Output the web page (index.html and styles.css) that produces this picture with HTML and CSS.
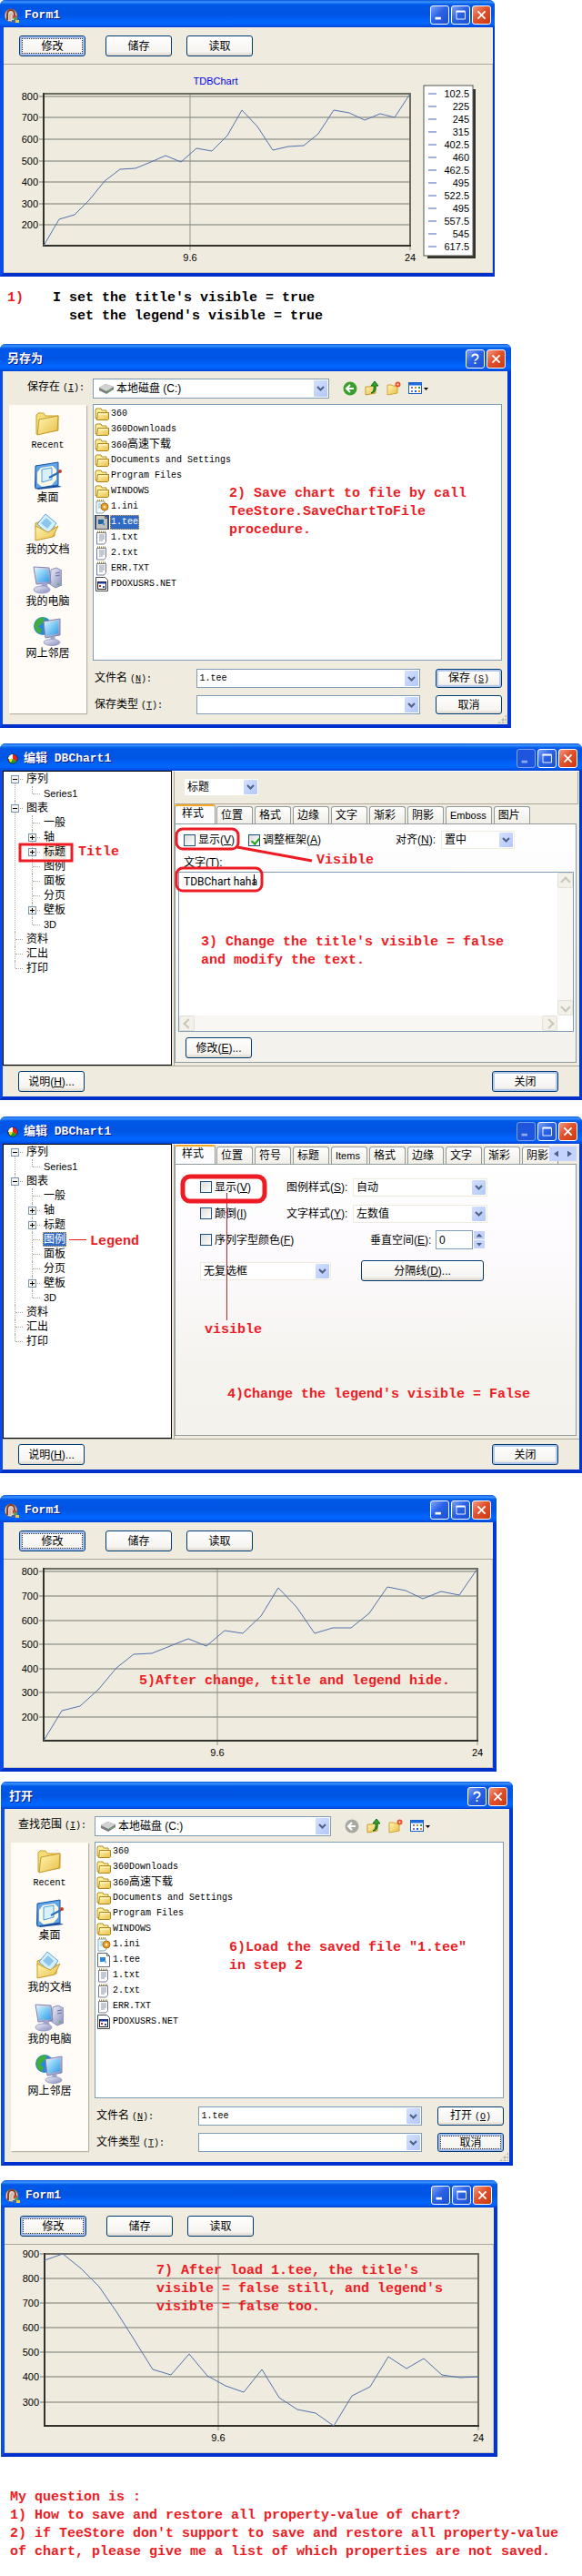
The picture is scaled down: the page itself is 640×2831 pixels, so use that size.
FILE: index.html
```html
<!DOCTYPE html>
<html lang="en">
<head>
	<meta charset="UTF-8">
	<meta name="viewport" content="width=device-width">
	<title>TeeChart: saving and restoring property values</title>

	<link rel="stylesheet" href="styles.css">
</head>

<body>

<!-- icons used by several windows -->
<svg class="sprite" aria-hidden="true">
	<defs>
		<linearGradient id="gFolder" x1="0" y1="0" x2="1" y2="1">
			<stop offset="0" stop-color="#fff6b5"/><stop offset="1" stop-color="#e9bf45"/>
		</linearGradient>
		<linearGradient id="gScreen" x1="0" y1="0" x2="1" y2="1">
			<stop offset="0" stop-color="#c6f3ff"/><stop offset="1" stop-color="#2f9be8"/>
		</linearGradient>
		<linearGradient id="gMetal" x1="0" y1="0" x2="1" y2="1">
			<stop offset="0" stop-color="#f1f2fb"/><stop offset="1" stop-color="#8389b8"/>
		</linearGradient>
	</defs>

	<symbol id="app" viewBox="0 0 16 16">
		<circle cx="7" cy="8" r="7" fill="#d8d5d2" stroke="#6b625e"/>
		<path d="M3 13V7a4 5 0 0 1 8 0v5" fill="none" stroke="#8d3a22" stroke-width="2"/>
		<path d="M6 13V7q1-3 3 0v5" fill="none" stroke="#dd9c72"/>
		<rect x="9" y="8" width="4" height="3" fill="#c74634"/><rect x="10" y="10" width="4" height="3" fill="#5b9b52"/>
		<rect x="8" y="13" width="4" height="3" fill="#3d63c0"/><rect x="12" y="13" width="4" height="3" fill="#f2c832"/>
	</symbol>
	<symbol id="pie" viewBox="0 0 12 12">
		<circle cx="6" cy="6" r="5" fill="#f4e01c" stroke="#111"/>
		<path d="M6 6V1A5 5 0 0 0 1 6z" fill="#fff"/><path d="M6 6V1a5 5 0 0 1 4 8z" fill="#e3221b"/>
		<path d="M6 6l4 3a5 5 0 0 1-6 1z" fill="#169c2b"/>
	</symbol>
	<symbol id="chev" viewBox="0 0 9 6"><path d="M1 1l3.500 3.500L8 1" fill="none" stroke="#4d6185" stroke-width="2"/></symbol>
	<symbol id="folder" viewBox="0 0 16 16">
		<path d="M1 13V3l1-1h5l1 2h5v9z" fill="#fff0a0" stroke="#b58a1b"/>
		<path d="M2.500 14.500l1-8h12v7l-1 1z" fill="url(#gFolder)" stroke="#b08318"/>
		<path d="M4 8h10" stroke="#fff9d8"/>
	</symbol>
	<symbol id="ini" viewBox="0 0 16 16">
		<path d="M2 2h9v11l-2 2H2z" fill="#f2fafd" stroke="#87a8b5"/><path d="M3 1h8" stroke="#b89535" stroke-dasharray="1 1" stroke-width="2"/>
		<path d="M4 5h3M4 7h3M4 9h3" stroke="#79bfe0"/><circle cx="11" cy="8" r="4" fill="#e79a21" stroke="#b36e12"/><circle cx="11" cy="8" r="1.500" fill="#fbe6b5"/>
	</symbol>
	<symbol id="tee" viewBox="0 0 16 16">
		<path d="M1.500.5h10l3 3v12h-13z" fill="#fff" stroke="#6c6c6c"/><path d="M11.500.5v3h3" fill="none" stroke="#6c6c6c"/>
		<path d="M4 5h6v5H4z" fill="#2f86d4"/><path d="M7 9h4v3z" fill="#74b9e8"/>
	</symbol>
	<symbol id="txt" viewBox="0 0 16 16">
		<path d="M2.500 2.500h10v10l-2 2.500h-8z" fill="#fff" stroke="#7b7b95"/><path d="M3 1.500h9" stroke="#93813c" stroke-width="2" stroke-dasharray="1 1"/>
		<path d="M5 5h6M5 7h6M5 9h6M5 11h4" stroke="#8693a8"/>
	</symbol>
	<symbol id="net" viewBox="0 0 16 16">
		<path d="M1.500.5h10l3 3v12h-13z" fill="#fff" stroke="#4c4c4c"/>
		<rect x="3.500" y="5.500" width="9" height="8" fill="#fff" stroke="#222"/><path d="M4 6.500h8" stroke="#1f3bb0" stroke-width="2"/>
		<rect x="5" y="9" width="2" height="2" fill="#d62121"/><rect x="9" y="10" width="2" height="2" fill="#2545d6"/>
	</symbol>
	<symbol id="disk" viewBox="0 0 16 12">
		<path d="M0 5l7-4 9 3v3l-8 5-8-4z" fill="#7c7c7c"/><path d="M0 5l7-4 9 3-8 5z" fill="#d2d2d2"/><path d="M10 9l4-2" stroke="#53c653" stroke-width="1"/>
	</symbol>

	<symbol id="p-recent" viewBox="0 0 32 32">
		<path d="M4 27V6l2-2h6l2 3h14v16z" fill="#f7dd78" stroke="#c9a02c"/>
		<path d="M5 28l2-17 21-4-1 16z" fill="url(#gFolder)" stroke="#c39a2a"/>
	</symbol>
	<symbol id="p-desk" viewBox="0 0 32 32">
		<path d="M2 5l24-3v24l5 2-26 3-4-3z" fill="#1d4f9e"/><path d="M2 5l25-4v25L2 30z" fill="#5fa5ea" stroke="#1b559f"/>
		<path d="M8 7l13-2 4 4v11l-5 6-11 2-5-4V12z" fill="#fdf8df"/>
		<path d="M9 9l11-2v13l-11 3z" fill="#d9f1ff" stroke="#4c9ee0"/><path d="M17 18l11-6" stroke="#2c6fb8" stroke-width="2"/><circle cx="29" cy="11" r="2" fill="#cf3b21"/>
	</symbol>
	<symbol id="p-docs" viewBox="0 0 32 32">
		<path d="M3 11l8-3 3 2h10v15L4 29z" fill="#f4d566" stroke="#c79a28"/>
		<path d="M5 12L14 1l12 10-9 12z" fill="#d6effc" stroke="#5da7da"/><path d="M9 11l6-6 6 6-5 6z" fill="#8cc6ee"/>
		<path d="M3 30V14l14 7 11-7-6 12z" fill="url(#gFolder)" stroke="#c79a28"/>
	</symbol>
	<symbol id="p-pc" viewBox="0 0 32 32">
		<path d="M20 5l6-2 6 3v16l-7 3-6-4z" fill="url(#gMetal)" stroke="#8a8fb8"/><path d="M25 9l5-1M25 12l5-1" stroke="#6c72a0"/><rect x="27" y="20" width="2" height="2" fill="#4fc04d"/>
		<path d="M1 2l17 1 2 17-16 1z" fill="url(#gMetal)" stroke="#7d84b4"/><path d="M3 4l14 1 1 13-13 1z" fill="url(#gScreen)"/>
		<path d="M10 20l5-1 2 6H9z" fill="#9ea3cb"/><ellipse cx="10" cy="27" rx="9" ry="4" fill="url(#gMetal)" stroke="#9ba0c6"/>
	</symbol>
	<symbol id="p-net" viewBox="0 0 32 32">
		<circle cx="11" cy="10" r="10" fill="#2e86d6"/><path d="M3 5q5-6 11-4l-3 5-5 5 4 3-2 5Q0 15 3 5z" fill="#3fae3b"/>
		<path d="M12 5l18-3v18l-16 3z" fill="url(#gMetal)" stroke="#7d84b4"/><path d="M14 7l14-3v14l-13 3z" fill="url(#gScreen)"/>
		<path d="M19 22l5-1 1 4h-5z" fill="#9ea3cb"/><ellipse cx="21" cy="28" rx="9" ry="3.500" fill="url(#gMetal)" stroke="#9ba0c6"/>
	</symbol>

	<symbol id="t-back" viewBox="0 0 16 16">
		<circle cx="8" cy="8" r="7.500" fill="currentColor"/><path d="M8 4L4 8l4 4M4 8h8" fill="none" stroke="#fff" stroke-width="2"/>
	</symbol>
	<symbol id="t-up" viewBox="0 0 16 16">
		<path d="M1 15V6h5l1-1h5v8z" fill="url(#gFolder)" stroke="#c39a2a"/><path d="M7 13q4-2 3-8H7l4-5 4 5h-3q1 8-5 8z" fill="#2fa32b" stroke="#146b17"/>
	</symbol>
	<symbol id="t-new" viewBox="0 0 16 16">
		<path d="M1 15V4h5l1 1h5v8z" fill="url(#gFolder)" stroke="#d0a238"/><circle cx="12.500" cy="3.500" r="2" fill="#fff" stroke="#e8532a" stroke-width="2"/>
	</symbol>
	<symbol id="t-view" viewBox="0 0 22 16">
		<rect x=".5" y="1.500" width="14" height="12" fill="#fff" stroke="#1f5fc7"/><path d="M1 3h13" stroke="#1d6be0" stroke-width="3"/>
		<path d="M3 7h2M3 11h2" stroke="#7a7a9c" stroke-width="2"/><path d="M7 7h2M11 11h2" stroke="#d08b34" stroke-width="2"/><path d="M11 7h2" stroke="#2a9a3b" stroke-width="2"/><path d="M7 11h2" stroke="#2555d8" stroke-width="2"/>
		<path d="M17 7h5l-2.500 3z" fill="#000"/>
	</symbol>
	<symbol id="w-min" viewBox="0 0 21 21"><rect x="5" y="13" width="7" height="3" fill="#fff"/></symbol>
	<symbol id="w-max" viewBox="0 0 21 21"><path d="M5 6.500h11v9H5.500v-9" fill="none" stroke="#fff"/><path d="M5 6h11" stroke="#fff" stroke-width="2"/></symbol>
	<symbol id="w-close" viewBox="0 0 21 21"><path d="M6 6l9 9M15 6l-9 9" stroke="#fff" stroke-width="2"/></symbol>
	<symbol id="w-help" viewBox="0 0 21 21"><path d="M7 8q0-3 3.500-3T14 8q0 2-2 3t-1.500 2M10.500 14.500v2" fill="none" stroke="#fff" stroke-width="2"/></symbol>
</svg>

<main>

<!-- step 1 -->
<section class="window form cut-right">
	<header class="titlebar">
		<svg class="app-icon"><use href="#app"/></svg>
		<h2>Form1</h2>
		<button class="wbtn" aria-label="Minimize"><svg><use href="#w-min"/></svg></button>
		<button class="wbtn" aria-label="Maximize"><svg><use href="#w-max"/></svg></button>
		<button class="wbtn close" aria-label="Close"><svg><use href="#w-close"/></svg></button>
	</header>
	<div class="toolbar">
		<button class="btn focused">修改</button>
		<button class="btn">储存</button>
		<button class="btn">读取</button>
	</div>
	<svg class="chart" viewBox="0 0 538 229">
		<text class="chart-title" x="233" y="22">TDBChart</text>
		<path class="grid" d="M39 35h408M39 58h408M39 82h408M39 106h408M39 129h408M39 153h408M39 176h408"/>
		<path class="grid thin" d="M205 32v172M447 199v5"/>
		<path class="frame-light" d="M44 32h403v167"/>
		<path class="frame" d="M44 31v168h404"/>
		<g class="ylabels">
			<text x="38" y="39">800</text><text x="38" y="62">700</text><text x="38" y="86">600</text><text x="38" y="110">500</text><text x="38" y="133">400</text><text x="38" y="157">300</text><text x="38" y="180">200</text>
		</g>
		<g class="xlabels"><text x="205" y="216">9.6</text><text x="447" y="216">24</text></g>
		<polyline class="series" points="44,199 61,170 78,165 94,149 111,128 128,115 145,114 162,107 178,100 195,107 212,92 229,95 246,78 262,50 279,68 296,94 313,90 330,89 346,76 363,50 380,53 397,61 414,54 430,58 447,32"/>
		<rect class="legend-shadow" x="466" y="27" width="53" height="186"/>
		<rect class="legend-box" x="462" y="23" width="54" height="187"/>
		<path class="legend-keys" d="M467 32h9M467 46h9M467 60h9M467 74h9M467 88h9M467 102h9M467 116h9M467 130h9M467 144h9M467 158h9M467 172h9M467 186h9M467 200h9"/>
		<g class="ylabels">
			<text x="512" y="36">102.5</text><text x="512" y="50">225</text><text x="512" y="64">245</text><text x="512" y="78">315</text><text x="512" y="92">402.5</text><text x="512" y="106">460</text><text x="512" y="120">462.5</text><text x="512" y="134">495</text><text x="512" y="148">522.5</text><text x="512" y="162">495</text><text x="512" y="176">557.5</text><text x="512" y="190">545</text><text x="512" y="204">617.5</text>
		</g>
	</svg>
</section>

<div class="caption">
	<span class="num">1)</span>
	<p>I set the title's visible = true<br><span class="indent">set the legend's visible = true</span></p>
</div>

<!-- step 2 -->
<section class="window dialog cut-left">
	<header class="titlebar">
		<h2>另存为</h2>
		<button class="wbtn help" aria-label="Help"><svg><use href="#w-help"/></svg></button>
		<button class="wbtn close" aria-label="Close"><svg><use href="#w-close"/></svg></button>
	</header>
	<div class="dialog-body">
		<div class="lookin">
			<label for="save-in">保存在<span class="lat">(<u>I</u>):</span></label>
			<div class="combo with-icon">
				<svg class="disk"><use href="#disk"/></svg>
				<select id="save-in"><option>本地磁盘 (C:)</option></select>
				<span class="arrow"><svg><use href="#chev"/></svg></span>
			</div>
			<div class="nav">
				<button class="tool green" aria-label="Back"><svg><use href="#t-back"/></svg></button>
				<button class="tool" aria-label="Up one level"><svg><use href="#t-up"/></svg></button>
				<button class="tool" aria-label="New folder"><svg><use href="#t-new"/></svg></button>
				<button class="tool wide" aria-label="Views"><svg><use href="#t-view"/></svg></button>
			</div>
		</div>
		<div class="browse">
			<nav class="places">
				<a href="#"><svg><use href="#p-recent"/></svg><span class="lat">Recent</span></a>
				<a href="#"><svg><use href="#p-desk"/></svg>桌面</a>
				<a href="#"><svg><use href="#p-docs"/></svg>我的文档</a>
				<a href="#"><svg><use href="#p-pc"/></svg>我的电脑</a>
				<a href="#"><svg><use href="#p-net"/></svg>网上邻居</a>
			</nav>
			<div class="right">
				<ul class="files">
					<li><svg><use href="#folder"/></svg><span>360</span></li>
					<li><svg><use href="#folder"/></svg><span>360Downloads</span></li>
					<li><svg><use href="#folder"/></svg><span>360<b class="cjk">高速下载</b></span></li>
					<li><svg><use href="#folder"/></svg><span>Documents and Settings</span></li>
					<li><svg><use href="#folder"/></svg><span>Program Files</span></li>
					<li><svg><use href="#folder"/></svg><span>WINDOWS</span></li>
					<li><svg><use href="#ini"/></svg><span>1.ini</span></li>
					<li class="selected"><svg><use href="#tee"/></svg><span>1.tee</span></li>
					<li><svg><use href="#txt"/></svg><span>1.txt</span></li>
					<li><svg><use href="#txt"/></svg><span>2.txt</span></li>
					<li><svg><use href="#txt"/></svg><span>ERR.TXT</span></li>
					<li><svg><use href="#net"/></svg><span>PDOXUSRS.NET</span></li>
				</ul>
				<div class="fields">
					<label for="save-name">文件名<span class="lat">(<u>N</u>):</span></label>
					<div class="combo"><input id="save-name" type="text" value="1.tee"><span class="arrow"><svg><use href="#chev"/></svg></span></div>
					<button class="btn default">保存<span class="lat">(<u>S</u>)</span></button>
					<label for="save-type">保存类型<span class="lat">(<u>T</u>):</span></label>
					<div class="combo"><select id="save-type"><option></option></select><span class="arrow"><svg><use href="#chev"/></svg></span></div>
					<button class="btn">取消</button>
				</div>
			</div>
		</div>
	</div>
	<span class="grip"></span>
	<p class="note note-2">2) Save chart to file by call<br>TeeStore.SaveChartToFile<br>procedure.</p>
</section>

<!-- step 3 -->
<section class="window editor">
	<header class="titlebar">
		<svg class="pie-icon"><use href="#pie"/></svg>
		<h2>编辑 DBChart1</h2>
		<button class="wbtn" aria-label="Minimize" disabled><svg><use href="#w-min"/></svg></button>
		<button class="wbtn" aria-label="Maximize"><svg><use href="#w-max"/></svg></button>
		<button class="wbtn close" aria-label="Close"><svg><use href="#w-close"/></svg></button>
	</header>
	<div class="split">
		<ul class="tree">
			<li><button class="twist minus" aria-label="Collapse"></button><span>序列</span>
				<ul><li><span class="small">Series1</span></li></ul>
			</li>
			<li><button class="twist minus" aria-label="Collapse"></button><span>图表</span>
				<ul>
					<li><span>一般</span></li>
					<li><button class="twist" aria-label="Expand"></button><span>轴</span></li>
					<li><button class="twist" aria-label="Expand"></button><span class="dim">标题</span></li>
					<li><span>图例</span></li>
					<li><span>面板</span></li>
					<li><span>分页</span></li>
					<li><button class="twist" aria-label="Expand"></button><span>壁板</span></li>
					<li><span class="small">3D</span></li>
				</ul>
			</li>
			<li><span>资料</span></li>
			<li><span>汇出</span></li>
			<li><span>打印</span></li>
		</ul>
		<div class="pane">
			<div class="pane-top">
				<div class="combo flat part"><select aria-label="Part"><option>标题</option></select><span class="arrow"><svg><use href="#chev"/></svg></span></div>
			</div>
			<div class="tabs" role="tablist">
				<button role="tab" class="on">样式</button><button role="tab">位置</button><button role="tab">格式</button><button role="tab">边缘</button><button role="tab">文字</button><button role="tab">渐彩</button><button role="tab">阴影</button><button role="tab" class="small">Emboss</button><button role="tab">图片</button>
			</div>
			<div class="panel">
				<div class="title-opts">
					<label class="check"><input type="checkbox">显示(<u>V</u>)</label>
					<label class="check"><input type="checkbox" checked>调整框架(<u>A</u>)</label>
					<label for="align">对齐(<u>N</u>):</label>
					<div class="combo flat"><select id="align"><option>置中</option></select><span class="arrow"><svg><use href="#chev"/></svg></span></div>
				</div>
				<label class="text-label" for="title-text">文字(<u>T</u>):</label>
				<div class="memo">
					<textarea id="title-text">TDBChart haha</textarea>
					<div class="vbar"><span class="sb up"></span><span class="sb down"></span></div>
					<div class="hbar"><span class="sb left"></span><span class="sb rightward"></span></div>
				</div>
				<button class="btn edit">修改(<u>E</u>)...</button>
			</div>
		</div>
	</div>
	<footer class="editor-foot">
		<button class="btn">说明(<u>H</u>)...</button>
		<button class="btn default">关闭</button>
	</footer>
	<svg class="marks" viewBox="0 0 640 392">
		<path d="M279.500 144v12" stroke="#000"/>
		<rect x="22" y="111" width="57" height="18" stroke-width="3"/>
		<rect x="194" y="94" width="68" height="22" rx="7" stroke-width="3"/>
		<rect x="194" y="137" width="94" height="25" rx="7" stroke-width="3"/>
		<path d="M261 114l82 15" stroke-width="3"/>
	</svg>
	<p class="note note-title">Title</p>
	<p class="note note-visible">Visible</p>
	<p class="note note-3">3) Change the title's visible = false<br>and modify the text.</p>
</section>

<!-- step 4 -->
<section class="window editor">
	<header class="titlebar">
		<svg class="pie-icon"><use href="#pie"/></svg>
		<h2>编辑 DBChart1</h2>
		<button class="wbtn" aria-label="Minimize" disabled><svg><use href="#w-min"/></svg></button>
		<button class="wbtn" aria-label="Maximize"><svg><use href="#w-max"/></svg></button>
		<button class="wbtn close" aria-label="Close"><svg><use href="#w-close"/></svg></button>
	</header>
	<div class="split">
		<ul class="tree">
			<li><button class="twist minus" aria-label="Collapse"></button><span>序列</span>
				<ul><li><span class="small">Series1</span></li></ul>
			</li>
			<li><button class="twist minus" aria-label="Collapse"></button><span>图表</span>
				<ul>
					<li><span>一般</span></li>
					<li><button class="twist" aria-label="Expand"></button><span>轴</span></li>
					<li><button class="twist" aria-label="Expand"></button><span>标题</span></li>
					<li><span class="picked">图例</span></li>
					<li><span>面板</span></li>
					<li><span>分页</span></li>
					<li><button class="twist" aria-label="Expand"></button><span>壁板</span></li>
					<li><span class="small">3D</span></li>
				</ul>
			</li>
			<li><span>资料</span></li>
			<li><span>汇出</span></li>
			<li><span>打印</span></li>
		</ul>
		<div class="pane">
			<div class="tabs" role="tablist">
				<button role="tab" class="on">样式</button><button role="tab">位置</button><button role="tab">符号</button><button role="tab">标题</button><button role="tab" class="small">Items</button><button role="tab">格式</button><button role="tab">边缘</button><button role="tab">文字</button><button role="tab">渐彩</button><button role="tab">阴影</button>
				<span class="tab-scroll"><button class="tri prev" aria-label="Previous tabs"></button><button class="tri next" aria-label="More tabs"></button></span>
			</div>
			<div class="panel legend-opts">
				<div class="row">
					<label class="check"><input type="checkbox">显示(<u>V</u>)</label>
					<label for="lstyle">图例样式(<u>S</u>):</label>
					<div class="combo flat"><select id="lstyle"><option>自动</option></select><span class="arrow"><svg><use href="#chev"/></svg></span></div>
				</div>
				<div class="row">
					<label class="check"><input type="checkbox">颠倒(<u>I</u>)</label>
					<label for="tstyle">文字样式(<u>Y</u>):</label>
					<div class="combo flat"><select id="tstyle"><option>左数值</option></select><span class="arrow"><svg><use href="#chev"/></svg></span></div>
				</div>
				<div class="row spin-row">
					<label class="check"><input type="checkbox">序列字型颜色(<u>F</u>)</label>
					<label for="vspace">垂直空间(<u>E</u>):</label>
					<input id="vspace" class="num-box" type="text" value="0">
					<span class="spin"><button class="tri inc" aria-label="Increase"></button><button class="tri dec" aria-label="Decrease"></button></span>
				</div>
				<div class="row last-row">
					<div class="combo flat"><select aria-label="Check boxes"><option>无复选框</option></select><span class="arrow"><svg><use href="#chev"/></svg></span></div>
					<button class="btn">分隔线(<u>D</u>)...</button>
				</div>
			</div>
		</div>
	</div>
	<footer class="editor-foot">
		<button class="btn">说明(<u>H</u>)...</button>
		<button class="btn default">关闭</button>
	</footer>
	<svg class="marks" viewBox="0 0 640 392">
		<rect x="201" y="66" width="90" height="27" rx="8" stroke-width="5"/>
		<path d="M249.500 84v140M76 135.500h19"/>
	</svg>
	<p class="note note-legend">Legend</p>
	<p class="note note-visible2">visible</p>
	<p class="note note-4">4)Change the legend's visible = False</p>
</section>

<!-- step 5 -->
<section class="window form after">
	<header class="titlebar">
		<svg class="app-icon"><use href="#app"/></svg>
		<h2>Form1</h2>
		<button class="wbtn" aria-label="Minimize"><svg><use href="#w-min"/></svg></button>
		<button class="wbtn" aria-label="Maximize"><svg><use href="#w-max"/></svg></button>
		<button class="wbtn close" aria-label="Close"><svg><use href="#w-close"/></svg></button>
	</header>
	<div class="toolbar">
		<button class="btn focused">修改</button>
		<button class="btn">储存</button>
		<button class="btn">读取</button>
	</div>
	<svg class="chart" viewBox="0 0 538 229">
		<path class="grid" d="M39 13h482M39 40h482M39 67h482M39 93h482M39 120h482M39 146h482M39 173h482"/>
		<path class="grid thin" d="M235 10v194M521 199v5"/>
		<path class="frame-light" d="M44 10h477v189"/>
		<path class="frame" d="M44 9v190h478"/>
		<g class="ylabels">
			<text x="38" y="17">800</text><text x="38" y="44">700</text><text x="38" y="71">600</text><text x="38" y="97">500</text><text x="38" y="124">400</text><text x="38" y="150">300</text><text x="38" y="177">200</text>
		</g>
		<g class="xlabels"><text x="235" y="216">9.6</text><text x="521" y="216">24</text></g>
		<polyline class="series" points="44,199 64,166 84,161 104,143 124,119 143,104 163,103 183,95 203,87 223,95 243,78 263,81 283,62 302,31 322,52 342,81 362,75 382,75 402,59 422,30 442,34 461,43 481,35 501,39 521,10"/>
	</svg>
	<p class="note note-5">5)After change, title and legend hide.</p>
</section>

<!-- step 6 -->
<section class="window dialog">
	<header class="titlebar">
		<h2>打开</h2>
		<button class="wbtn help" aria-label="Help"><svg><use href="#w-help"/></svg></button>
		<button class="wbtn close" aria-label="Close"><svg><use href="#w-close"/></svg></button>
	</header>
	<div class="dialog-body">
		<div class="lookin">
			<label for="open-in">查找范围<span class="lat">(<u>I</u>):</span></label>
			<div class="combo with-icon">
				<svg class="disk"><use href="#disk"/></svg>
				<select id="open-in"><option>本地磁盘 (C:)</option></select>
				<span class="arrow"><svg><use href="#chev"/></svg></span>
			</div>
			<div class="nav">
				<button class="tool grey" aria-label="Back" disabled><svg><use href="#t-back"/></svg></button>
				<button class="tool" aria-label="Up one level"><svg><use href="#t-up"/></svg></button>
				<button class="tool" aria-label="New folder"><svg><use href="#t-new"/></svg></button>
				<button class="tool wide" aria-label="Views"><svg><use href="#t-view"/></svg></button>
			</div>
		</div>
		<div class="browse">
			<nav class="places">
				<a href="#"><svg><use href="#p-recent"/></svg><span class="lat">Recent</span></a>
				<a href="#"><svg><use href="#p-desk"/></svg>桌面</a>
				<a href="#"><svg><use href="#p-docs"/></svg>我的文档</a>
				<a href="#"><svg><use href="#p-pc"/></svg>我的电脑</a>
				<a href="#"><svg><use href="#p-net"/></svg>网上邻居</a>
			</nav>
			<div class="right">
				<ul class="files">
					<li><svg><use href="#folder"/></svg><span>360</span></li>
					<li><svg><use href="#folder"/></svg><span>360Downloads</span></li>
					<li><svg><use href="#folder"/></svg><span>360<b class="cjk">高速下载</b></span></li>
					<li><svg><use href="#folder"/></svg><span>Documents and Settings</span></li>
					<li><svg><use href="#folder"/></svg><span>Program Files</span></li>
					<li><svg><use href="#folder"/></svg><span>WINDOWS</span></li>
					<li><svg><use href="#ini"/></svg><span>1.ini</span></li>
					<li><svg><use href="#tee"/></svg><span>1.tee</span></li>
					<li><svg><use href="#txt"/></svg><span>1.txt</span></li>
					<li><svg><use href="#txt"/></svg><span>2.txt</span></li>
					<li><svg><use href="#txt"/></svg><span>ERR.TXT</span></li>
					<li><svg><use href="#net"/></svg><span>PDOXUSRS.NET</span></li>
				</ul>
				<div class="fields">
					<label for="open-name">文件名<span class="lat">(<u>N</u>):</span></label>
					<div class="combo"><input id="open-name" type="text" value="1.tee"><span class="arrow"><svg><use href="#chev"/></svg></span></div>
					<button class="btn">打开<span class="lat">(<u>O</u>)</span></button>
					<label for="open-type">文件类型<span class="lat">(<u>T</u>):</span></label>
					<div class="combo"><select id="open-type"><option></option></select><span class="arrow"><svg><use href="#chev"/></svg></span></div>
					<button class="btn focused">取消</button>
				</div>
			</div>
		</div>
	</div>
	<span class="grip"></span>
	<p class="note note-6">6)Load the saved file "1.tee"<br>in step 2</p>
</section>

<!-- step 7 -->
<section class="window form reloaded">
	<header class="titlebar">
		<svg class="app-icon"><use href="#app"/></svg>
		<h2>Form1</h2>
		<button class="wbtn" aria-label="Minimize"><svg><use href="#w-min"/></svg></button>
		<button class="wbtn" aria-label="Maximize"><svg><use href="#w-max"/></svg></button>
		<button class="wbtn close" aria-label="Close"><svg><use href="#w-close"/></svg></button>
	</header>
	<div class="toolbar">
		<button class="btn focused">修改</button>
		<button class="btn">储存</button>
		<button class="btn">读取</button>
	</div>
	<svg class="chart" viewBox="0 0 538 229">
		<path class="grid" d="M39 10h482M39 37h482M39 64h482M39 91h482M39 118h482M39 145h482M39 173h482"/>
		<path class="grid thin" d="M235 10v194M521 199v5"/>
		<path class="frame-light" d="M44 10h477v189"/>
		<path class="frame" d="M44 9v190h478"/>
		<g class="ylabels">
			<text x="38" y="14">900</text><text x="38" y="41">800</text><text x="38" y="68">700</text><text x="38" y="95">600</text><text x="38" y="122">500</text><text x="38" y="149">400</text><text x="38" y="177">300</text>
		</g>
		<g class="xlabels"><text x="235" y="216">9.6</text><text x="521" y="216">24</text></g>
		<polyline class="series" points="44,17 64,10 84,26 104,46 124,75 143,105 163,137 183,143 203,120 223,144 243,155 263,162 283,137 302,168 322,181 342,185 362,199 382,166 402,156 422,123 442,136 461,125 481,143 501,146 521,145"/>
	</svg>
	<p class="note note-7">7) After load 1.tee, the title's<br>visible = false still, and legend's<br>visible = false too.</p>
</section>

<p class="question">My question is :<br>
1) How to save and restore all property-value of chart?<br>
2) if TeeStore don't support to save and restore all property-value<br>
of chart, please give me a list of which properties are not saved.</p>

</main>

</body>

</html>
```

FILE: styles.css
```css
* { box-sizing: border-box; }

body {
	margin: 0;
	background: #fff;
	color: #000;
	font: 12px/16px "Liberation Sans", "Noto Sans CJK SC", sans-serif;
}

.sprite { position: absolute; width: 0; height: 0; }

svg { display: block; }
h2, p, ul { margin: 0; padding: 0; }
ul { list-style: none; }

button, input, select, textarea {
	font: inherit;
	color: inherit;
	margin: 0;
	padding: 0;
}

.lat { padding-left: 3px; font-family: "Liberation Mono", monospace; font-size: 10px; }
.small, .tabs button.small { font-size: 11px; }

/* ---- window frame ---- */

.window {
	position: relative;
	display: flex;
	flex-direction: column;
	background: #efebde;
	border: 4px solid #0a4ce8;
	border-top: 0;
	border-right-color: #0038d8;
	border-bottom-color: #0030cc;
	border-radius: 6px 6px 0 0;
}

.titlebar {
	display: flex;
	align-items: center;
	gap: 2px;
	height: 30px;
	margin: 0 -4px;
	padding: 3px 6px 0 5px;
	border-radius: 6px 6px 0 0;
	background: linear-gradient(#0a50d8, #3c96ff 2px, #0058e8 5px, #0054e3 16px, #0066ff 24px, #0060f8 27px, #0040d0);
	color: #fff;
}

.titlebar h2 {
	flex: 1;
	padding-left: 4px;
	font: bold 13px/18px "Liberation Mono", "Noto Sans CJK SC", monospace;
	text-shadow: 1px 1px 0 #0a1883;
}

.app-icon { width: 16px; height: 16px; }
.pie-icon { width: 12px; height: 12px; margin-left: 3px; }

.wbtn {
	width: 21px;
	height: 21px;
	border: 1px solid #fff;
	border-radius: 3px;
	background: linear-gradient(135deg, #7fa3f5, #2a62e6 45%, #1c4fd0);
}
.wbtn svg { width: 19px; height: 19px; }
.wbtn.close { background: linear-gradient(135deg, #f09a80, #e2512c 45%, #c93a12); }
.wbtn:disabled { border-color: #7d9ff0; background: #1f55dd; }
.wbtn:disabled svg { opacity: .5; }

/* ---- controls ---- */

.btn {
	min-width: 73px;
	height: 23px;
	border: 1px solid #003c74;
	border-radius: 3px;
	background: linear-gradient(#fff, #f6f4f0 80%, #dcd6cc);
	text-align: center;
	white-space: nowrap;
}
.btn.default { box-shadow: inset 0 0 0 2px #b4c8ee; }
.btn.focused {
	box-shadow: inset 0 0 0 2px #a4bdf0;
	outline: 1px dotted #333;
	outline-offset: -4px;
}

.combo {
	position: relative;
	display: flex;
	height: 22px;
	border: 1px solid #7f9db9;
	background: #fff;
}
.combo select, .combo input {
	flex: 1;
	min-width: 0;
	padding: 0 18px 0 3px;
	border: 0;
	outline: 0;
	background: none;
	appearance: none;
}
.combo input { font-family: "Liberation Mono", monospace; font-size: 10px; }
.combo .arrow {
	position: absolute;
	top: 1px;
	right: 1px;
	bottom: 1px;
	display: grid;
	place-items: center;
	width: 15px;
	border-radius: 1px;
	background: linear-gradient(135deg, #d3e0ff, #b3c7f8);
	pointer-events: none;
}
.combo .arrow svg { width: 9px; height: 6px; }
.combo.flat { height: 20px; border-color: #efebde; }
.with-icon { align-items: center; padding-left: 6px; }
.disk { width: 16px; height: 12px; }
.with-icon select { height: 20px; }

.check { display: flex; align-items: center; white-space: nowrap; }
.check input {
	appearance: none;
	width: 13px;
	height: 13px;
	margin-right: 3px;
	border: 1px solid #1c5180;
	background: linear-gradient(135deg, #dcdcd7, #fff);
}
.check input:checked::before {
	content: "";
	display: block;
	width: 4px;
	height: 7px;
	margin: 1px 0 0 4px;
	border: solid #21a121;
	border-width: 0 2px 2px 0;
	transform: rotate(40deg);
}

/* ---- Form1 ---- */

.form { max-width: 546px; }
.cut-right { max-width: 544px; border-right-width: 2px; }
.cut-right .titlebar { margin-right: -2px; padding-right: 4px; }
.after { margin-top: 24px; }
.reloaded { margin: 16px 0 0 1px; }

.toolbar {
	display: flex;
	gap: 16px;
	height: 41px;
	padding: 9px 17px;
	border-bottom: 1px solid #aca899;
}
.toolbar .btn:first-child { margin-right: 6px; }

.chart {
	width: 100%;
	font-size: 11px;
	box-shadow: inset -1px -1px 0 #c8c4b6;
}
.chart-title { fill: #00f; text-anchor: middle; }
.grid { stroke: #b3b2a8; stroke-width: 2; }
.grid.thin { stroke: #96958c; stroke-width: 1; }
.frame-light { fill: none; stroke: #6c6c60; stroke-width: 2; }
.frame { fill: none; stroke: #33322c; stroke-width: 2; }
.series { fill: none; stroke: #5373ae; }
.ylabels { text-anchor: end; }
.xlabels { text-anchor: middle; }
.legend-shadow { fill: #33322c; }
.legend-box { fill: #fff; stroke: #55544c; }
.legend-keys { stroke: #a3b0da; stroke-width: 2; }

/* ---- red and black remarks ---- */

.caption, .note, .question {
	font: bold 15px/20px "Liberation Mono", monospace;
}
.caption { display: flex; gap: 32px; padding: 14px 8px 20px; }
.caption .num { color: #ed1c24; }
.indent { padding-left: 18px; }

.note, .question { color: #ed1c24; }
.note { position: absolute; white-space: nowrap; }
.question { padding: 35px 0 20px 11px; white-space: nowrap; }

.marks {
	position: absolute;
	top: 0;
	left: -3px;
	width: 640px;
	fill: none;
	stroke: #ed1c24;
	pointer-events: none;
}

.note-2 { top: 155px; left: 249px; }
.note-title { top: 110px; left: 83px; }
.note-visible { top: 119px; left: 345px; }
.note-3 { top: 209px; left: 218px; }
.note-legend { top: 128px; left: 96px; }
.note-visible2 { top: 225px; left: 222px; }
.note-4 { top: 296px; left: 247px; }
.note-5 { top: 195px; left: 149px; }
.note-6 { top: 173px; left: 247px; }
.note-7 { top: 90px; left: 167px; }

/* ---- open / save dialogs ---- */

.dialog { max-width: 563px; margin: 11px 0 0 1px; }
.cut-left { max-width: 562px; margin: 0; border-left-width: 3px; }
.cut-left .titlebar { margin-left: -3px; padding-left: 4px; }

.dialog-body { padding: 8px 6px 10px 7px; }

.lookin {
	display: grid;
	grid-template-columns: 85px 260px auto;
	column-gap: 7px;
	margin-bottom: 6px;
}
.lookin > label { padding: 1px 2px 0 0; text-align: right; }
.nav { display: flex; align-items: center; gap: 8px; padding-left: 8px; }
.tool { width: 16px; height: 16px; border: 0; background: none; }
.tool svg { width: 16px; height: 16px; }
.tool.wide, .tool.wide svg { width: 22px; }
.green { color: #3a9f2c; }
.grey { color: #a9a9a4; }

.browse { display: grid; grid-template-columns: 85px 1fr; column-gap: 7px; }

.places {
	display: flex;
	flex-direction: column;
	align-items: center;
	gap: 9px;
	margin: 1px 0 2px;
	padding-top: 5px;
	background: #fffcf8;
	box-shadow: 1px 1px 1px #b8b4a6;
}
.places a {
	display: flex;
	flex-direction: column;
	align-items: center;
	height: 48px;
	color: #000;
	text-decoration: none;
}
.places svg { width: 32px; height: 32px; }
.places .lat { padding: 0; }

.files {
	height: 282px;
	padding: 1px;
	border: 1px solid #7f9db9;
	background: #fff;
	font: 10px/17px "Liberation Mono", monospace;
}
.files li { display: flex; align-items: center; gap: 1px; height: 17px; }
.files svg { width: 16px; height: 16px; }
.files span { padding: 0 1px; line-height: 16px; white-space: pre; }
.files .cjk { font: 12px/16px "Noto Sans CJK SC", sans-serif; }
.files .selected span { background: #316ac5; color: #fff; outline: 1px dotted #d8a050; outline-offset: -1px; }
.files .selected svg { background: #316ac5; filter: brightness(.75); }

.fields {
	display: grid;
	grid-template-columns: 94px 246px 73px;
	justify-content: space-between;
	gap: 7px 0;
	margin-top: 9px;
	padding-left: 2px;
}
.fields label { line-height: 21px; }
.fields .combo, .fields .btn { height: 21px; }

.grip {
	position: absolute;
	right: 1px;
	bottom: 1px;
	width: 10px;
	height: 10px;
	background: radial-gradient(#b8b4a6 1px, transparent 2px) 0 0 / 4px 4px;
	clip-path: polygon(100% 0, 100% 100%, 0 100%);
}

/* ---- chart editor ---- */

.editor { margin-top: 18px; border-width: 0 3px 4px; }
.cut-left + .editor { margin-top: 17px; }
.editor .titlebar { margin: 0 -3px; padding-right: 5px; }

.split { display: flex; height: 324px; }

.tree {
	width: 186px;
	padding-left: 24px;
	border: 1px solid #000;
	background: #fff;
}
.tree ul { padding-left: 19px; }
.tree li { position: relative; }
.tree li > span { display: block; width: max-content; height: 16px; padding: 0 1px; }
.tree li::before {
	content: "";
	position: absolute;
	top: 0;
	bottom: 0;
	left: -12px;
	border-left: 1px dotted #aca899;
}
.tree li:last-child::before { bottom: auto; height: 8px; }
.tree > li:first-child::before { top: 8px; }
.tree li::after {
	content: "";
	position: absolute;
	top: 8px;
	left: -11px;
	width: 8px;
	border-top: 1px dotted #aca899;
}
.twist {
	position: absolute;
	top: 4px;
	left: -16px;
	z-index: 1;
	width: 9px;
	height: 9px;
	border: 1px solid #7898b5;
	background:
		linear-gradient(#000, #000) center / 5px 1px no-repeat,
		linear-gradient(#000, #000) center / 1px 5px no-repeat,
		#f4f2ea;
}
.twist.minus { background: linear-gradient(#000, #000) center / 5px 1px no-repeat, #f4f2ea; }
.tree .dim { background: #efebde; }
.tree .picked { background: #316ac5; color: #fff; outline: 1px dotted #d8a050; outline-offset: -1px; }

.pane {
	flex: 1;
	min-width: 0;
	display: flex;
	flex-direction: column;
	margin-left: 2px;
	padding: 0 3px 3px 0;
	border-top: 1px solid #fff;
	border-left: 1px solid #aca899;
}
.pane-top {
	height: 36px;
	margin-right: -2px;
	padding: 7px 10px;
	border-right: 1px solid #aca899;
	border-bottom: 1px solid #aca899;
}
.part { width: 83px; }

.tabs { position: relative; display: flex; align-items: flex-end; height: 21px; overflow: hidden; }
.tabs button[role="tab"] {
	flex: none;
	min-width: 40px;
	height: 19px;
	margin-right: 2px;
	padding: 0 5px 0 4px;
	border: 1px solid #919b9c;
	border-bottom: 0;
	border-radius: 3px 3px 0 0;
	background: linear-gradient(#fff, #f0eee6);
	text-align: left;
}
.tabs button[role="tab"].on {
	min-width: 45px;
	height: 21px;
	margin-right: 1px;
	padding: 0 8px 3px 7px;
	border-top: 2px solid #f5a623;
	background: #fcfcfe;
}
.tab-scroll { position: absolute; top: 2px; right: 0; display: flex; background: #c3d3fd; }
.tri { width: 15px; height: 16px; border: 0; background: #c3d3fd; }
.tri::before {
	content: "";
	display: block;
	width: 5px;
	height: 7px;
	margin: auto;
	background: #4d6185;
}
.prev::before { clip-path: polygon(100% 0, 100% 100%, 0 50%); }
.next::before { clip-path: polygon(0 0, 100% 50%, 0 100%); }

.panel {
	flex: 1;
	padding: 7px 2px 0 3px;
	border: 1px solid #919b9c;
	background: linear-gradient(#fff, #fdfafd 35%, #f5f3ee 75%, #f4f2ec);
}
.title-opts {
	display: grid;
	grid-template-columns: 71px 162px 50px 81px;
	align-items: center;
	padding-left: 6px;
}
.text-label { display: block; padding: 7px 0 2px 6px; }
.memo {
	display: grid;
	grid-template: 157px 17px / 1fr 17px;
	border: 1px solid #7f9db9;
	background: #fff;
}
.memo textarea {
	padding: 2px 5px;
	border: 0;
	outline: 0;
	resize: none;
	background: none;
	font-family: Roboto, sans-serif;
}
.vbar, .hbar { display: flex; justify-content: space-between; background: #f8f7f4; }
.vbar { flex-direction: column; }
.sb {
	display: grid;
	place-items: center;
	width: 17px;
	height: 17px;
	border: 1px solid #e3e0d6;
	border-radius: 2px;
	background: #f3f1ea;
}
.sb::before {
	content: "";
	width: 6px;
	height: 6px;
	border: solid #c9c7ba;
	border-width: 2px 0 0 2px;
	transform: translateY(1px) rotate(45deg);
}
.sb.down::before { transform: translateY(-1px) rotate(225deg); }
.sb.left::before { transform: translateX(1px) rotate(-45deg); }
.sb.rightward::before { transform: translateX(-1px) rotate(135deg); }
.edit { margin: 6px 0 0 8px; }

.legend-opts { display: flex; flex-direction: column; gap: 8px; padding: 14px 0 0 27px; }
.row {
	display: grid;
	grid-template-columns: 95px 73px 148px;
	align-items: center;
	height: 21px;
}
.spin-row { grid-template-columns: 187px 72px 41px 13px; }
.num-box { height: 21px; padding-left: 3px; border: 1px solid #7f9db9; background: #fff; }
.spin { display: grid; gap: 1px; padding-left: 1px; }
.spin .tri { width: 12px; height: 9px; }
.spin .tri::before { width: 7px; height: 4px; }
.inc::before { clip-path: polygon(50% 0, 100% 100%, 0 100%); }
.dec::before { clip-path: polygon(0 0, 100% 0, 50% 100%); }
.last-row { grid-template-columns: 144px 135px; column-gap: 33px; margin-top: 4px; }

.editor-foot {
	display: flex;
	justify-content: space-between;
	padding: 5px 23px 5px 17px;
	border-top: 1px solid #aca899;
}
```
